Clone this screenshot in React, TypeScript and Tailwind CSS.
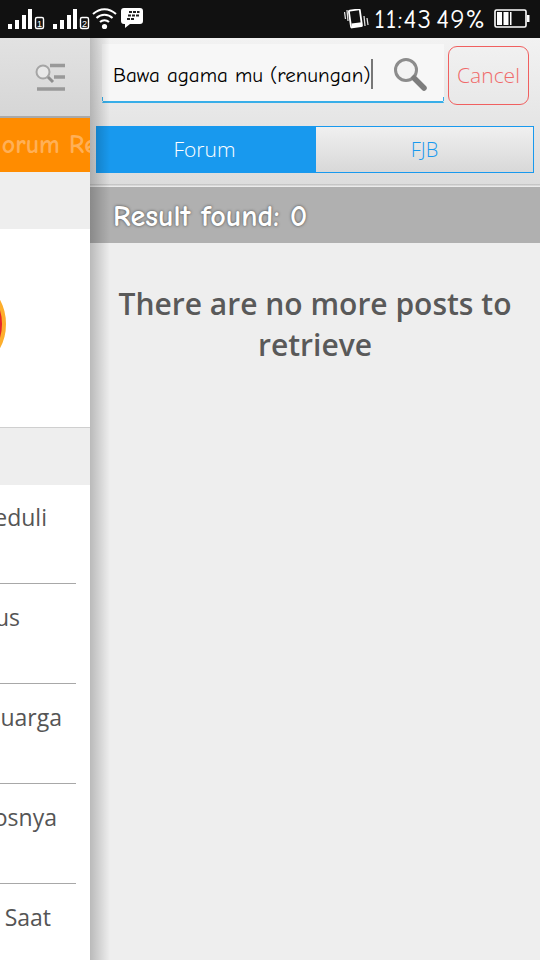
const hand = "font-['Comic_Neue','Noto_Sans',cursive]";

function Signal({ n }: { n: string }) {
  return (
    <svg width="37" height="21" viewBox="0 0 37 21" className="block">
      <rect x="0" y="15" width="4" height="5" fill="#fff" />
      <rect x="7" y="11" width="4" height="9" fill="#fff" />
      <rect x="14" y="6" width="4" height="14" fill="#fff" />
      <rect x="20" y="0" width="4" height="20" fill="#fff" />
      <rect x="27.5" y="8.5" width="8" height="11" rx="1.5" fill="none" stroke="#fff" strokeWidth="1.4" />
      <text x="31.5" y="17.5" fontSize="9" fill="#fff" textAnchor="middle" fontFamily="'Liberation Sans'">{n}</text>
    </svg>
  );
}

function StatusBar() {
  return (
    <div className="h-[38px] bg-[#111111] flex items-center shrink-0 relative">
      <div className="flex items-start pl-[8px] pt-[1px] gap-[8px]">
        <Signal n="1" />
        <Signal n="2" />
      </div>
      <svg width="25" height="22" viewBox="0 0 25 22" className="ml-[2px] -mt-[1px]" fill="none" stroke="#fff" strokeWidth="2">
        <path d="M1 6 C8 -0.5 17 -0.5 24 6" />
        <path d="M4.5 10 C9 5.5 16 5.5 20.5 10" />
        <path d="M8 14 C10.5 11.5 14.5 11.5 17 14" />
        <circle cx="12.5" cy="18.5" r="2.6" fill="#fff" stroke="none" />
      </svg>
      <svg width="22" height="21" viewBox="0 0 22 21" className="ml-[4px] -mt-[2px]">
        <path d="M3 0 H19 Q22 0 22 3 V13 Q22 16 19 16 H9 L4 20 V16 H3 Q0 16 0 13 V3 Q0 0 3 0 Z" fill="#fff" />
        <g fill="#222">
          <rect x="8" y="3" width="3" height="2" /><rect x="12" y="3" width="3" height="2" /><rect x="16" y="3" width="2.5" height="2" />
          <rect x="7" y="6.5" width="3" height="2" /><rect x="11" y="6.5" width="3" height="2" /><rect x="15" y="6.5" width="3" height="2" />
          <rect x="6" y="10" width="3" height="2" /><rect x="10" y="10" width="3" height="2" />
        </g>
      </svg>
      <div className="ml-auto flex items-center">
        <svg width="25" height="22" viewBox="0 0 25 22" className="mr-[5px] mt-[1px]" fill="none" stroke="#ddd" strokeWidth="1.3">
          <rect x="6" y="1" width="11" height="17" rx="1" transform="rotate(-8 11 10)" strokeWidth="1.8" stroke="#fff" />
          <rect x="7" y="14" width="10" height="4" fill="#fff" stroke="none" transform="rotate(-8 11 10)" />
          <path d="M3 1 L4 12 M0.5 3 L1.5 10 M20 7 L21 17 M23 9 L24 16" />
        </svg>
        <span className={`${hand} text-white text-[27px] leading-none tracking-[1px] [word-spacing:-6px] mr-[8px]`}>11:43 49%</span>
        <svg width="36" height="20" viewBox="0 0 36 20" className="mr-[10px]">
          <rect x="1" y="1" width="31" height="17" rx="1.5" fill="none" stroke="#fff" strokeWidth="1.6" />
          <rect x="3" y="3" width="5" height="13" fill="#fff" />
          <rect x="9.5" y="3" width="5" height="13" fill="#fff" />
          <rect x="16" y="3" width="1.5" height="13" fill="#fff" />
          <rect x="33" y="6" width="2.5" height="7" fill="#fff" />
        </svg>
      </div>
    </div>
  );
}

function Row({ text, box }: { text: string; box: string }) {
  return (
    <div className={`border-b border-[#a8a8a8] mr-[14px] flex justify-end ${box}`}>
      <span className="text-[23px] leading-none text-[#555] whitespace-nowrap">{text}</span>
    </div>
  );
}

function LeftPanel() {
  return (
    <div className="w-[90px] shrink-0 overflow-hidden flex flex-col font-['Open_Sans',sans-serif]">
      <div className="h-[78px] bg-gradient-to-b from-[#e2e2e2] to-[#d6d6d6] flex items-center justify-end pr-[24px] shrink-0">
        <svg width="32" height="30" viewBox="0 0 32 30" fill="none">
          <circle cx="9" cy="10" r="6.5" stroke="#a5a5a5" strokeWidth="2" fill="#e8e8e8" />
          <path d="M14 15 L19 20" stroke="#8e8e8e" strokeWidth="3" />
          <path d="M16 3.5 H31 M20 15 H31 M3 27 H31" stroke="#999" strokeWidth="3.4" />
        </svg>
      </div>
      <div className="h-[2px] bg-[#a9a9a9] shrink-0" />
      <div className="h-[54px] bg-[#ff8c00] flex items-center justify-end shrink-0 overflow-hidden">
        <span className={`${hand} font-bold text-[26px] text-[#ffb057] whitespace-nowrap -mr-[7px]`}>orum Re</span>
      </div>
      <div className="h-[57px] bg-[#eeeeee] shrink-0" />
      <div className="h-[198px] bg-white shrink-0 flex items-center overflow-hidden">
        <div className="w-[102px] h-[102px] rounded-full bg-[#e5252a] border-[4px] border-[#fdae2c] -ml-[96px] -mt-[8px] shrink-0" />
      </div>
      <div className="h-[58px] bg-[#eeeeee] border-t border-[#cfcfcf] shrink-0" />
      <div className="flex-1 bg-white">
        <Row text="eduli" box="h-[99px] pt-[21px] pr-[29px]" />
        <Row text="us" box="h-[100px] pt-[22px] pr-[56px]" />
        <Row text="uarga" box="h-[100px] pt-[22px] pr-[14px]" />
        <Row text="osnya" box="h-[100px] pt-[22px] pr-[19px]" />
        <Row text="Saat" box="h-[100px] pt-[22px] pr-[25px]" />
      </div>
    </div>
  );
}

function RightPanel() {
  return (
    <div className="flex-1 bg-[#eeeeee] flex flex-col relative font-['Open_Sans',sans-serif]">
      <div className="absolute left-0 top-0 bottom-0 w-[20px] bg-gradient-to-r from-[#00000038] to-transparent pointer-events-none z-10" />
      <div className="h-[149px] bg-gradient-to-b from-[#f2f2f2] to-[#dcdcdc] pt-[6px] shrink-0">
        <div className="flex items-start pl-[12px] pr-[11px] gap-[4px]">
          <div className="w-[342px] h-[59px] bg-[#f7f7f7] border-b-2 border-x border-b-[#38aee8] border-x-transparent relative flex items-center pl-[10px] pr-[16px]">
            <span className="absolute left-[-1px] bottom-0 w-px h-[4px] bg-[#38aee8]" />
            <span className="absolute right-[-1px] bottom-0 w-px h-[4px] bg-[#38aee8]" />
            <span className={`${hand} text-black text-[21px] leading-none whitespace-nowrap mt-[5px]`}>Bawa agama mu (renungan)</span>
            <span className="w-[2px] h-[30px] bg-[#777] shrink-0 mt-[2px]" />
            <svg width="34" height="34" viewBox="0 0 34 34" className="ml-auto mt-[2px]" fill="none">
              <circle cx="13" cy="13" r="10.5" stroke="#8c8c8c" strokeWidth="3" fill="#f3f3f3" />
              <path d="M21 21 L31 31" stroke="#7d7d7d" strokeWidth="5.5" strokeLinecap="round" />
            </svg>
          </div>
          <div className="w-[81px] h-[59px] mt-[2px] rounded-[9px] border border-[#f06060] flex items-center justify-center text-[21px] font-light text-[#f06a6a]">Cancel</div>
        </div>
        <div className="flex mt-[21px] ml-[6px] mr-[6px] h-[47px] border border-[#1899ee]">
          <div className="w-[219px] bg-[#1899ee] flex items-center justify-center text-white text-[21px] font-light pr-[4px]">Forum</div>
          <div className="flex-1 bg-gradient-to-b from-[#f0f0f0] to-[#d8d8d8] flex items-center justify-center text-[#1899ee] text-[20px] font-light">FJB</div>
        </div>
        <div className="h-[11px]" />
        <div className="h-[3px] bg-gradient-to-b from-[#bcbcbc] to-[#f5f5f5]" />
      </div>
      <div className="h-[56px] bg-[#b0b0b0] flex items-center pl-[23px] shrink-0">
        <span className={`${hand} text-white text-[30px] font-bold leading-none whitespace-nowrap mt-[3px] [text-shadow:0_0_3px_#444]`}>Result found: 0</span>
      </div>
      <div className="text-center text-[30px] leading-[41px] font-semibold text-[#595959] pt-[40px] px-[12px]">
        There are no more posts to retrieve
      </div>
    </div>
  );
}

export default function App() {
  return (
    <div className="w-[540px] h-[960px] overflow-hidden flex flex-col">
      <StatusBar />
      <div className="flex flex-1 min-h-0">
        <LeftPanel />
        <RightPanel />
      </div>
    </div>
  );
}
